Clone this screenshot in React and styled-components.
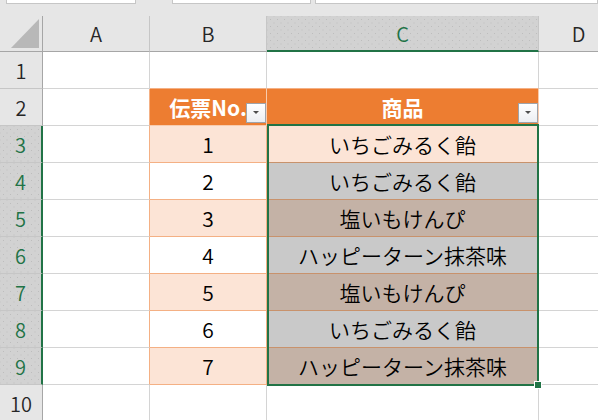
import React from 'react'
import styled, { createGlobalStyle, css } from 'styled-components'

const GlobalStyle = createGlobalStyle`
  html, body {
    margin: 0;
    padding: 0;
    background: #ffffff;
  }
  body {
    font-family: "Noto Sans CJK JP", "Noto Sans", sans-serif;
    font-weight: 350;
  }
`

const GREEN = '#217346'
const GRID = '#d4d4d4'
const HEAD_LINE = '#c6c6c6'

const fills = {
  peach: '#fce4d6',
  white: '#ffffff',
  gray: '#c9c9c9',
  brown: '#c4b2a6',
}

const columns = ['A', 'B', 'C', 'D']

const rows = [
  { n: 1 },
  { n: 2, header: true },
  { n: 3, no: 1, item: 'いちごみるく飴', tone: 'peach' },
  { n: 4, no: 2, item: 'いちごみるく飴', tone: 'gray' },
  { n: 5, no: 3, item: '塩いもけんぴ', tone: 'brown' },
  { n: 6, no: 4, item: 'ハッピーターン抹茶味', tone: 'gray' },
  { n: 7, no: 5, item: '塩いもけんぴ', tone: 'brown' },
  { n: 8, no: 6, item: 'いちごみるく飴', tone: 'gray' },
  { n: 9, no: 7, item: 'ハッピーターン抹茶味', tone: 'brown' },
  { n: 10 },
]

// selected range C3:C9 starts on the first data row
const SELECTION_START = 3
const SELECTION_ROWS = 7

const dotted = css`
  background-color: #d2d2d2;
  background-image:
    radial-gradient(circle, #bdbdbd 0.6px, transparent 0.9px),
    radial-gradient(circle, #bdbdbd 0.6px, transparent 0.9px);
  background-size: 7px 7px;
  background-position: 0 0, 3.5px 3.5px;
`

class Sheet extends React.Component {
  render() {
    return (
      <Window>
        <GlobalStyle />
        <FormulaStrip>
          <StripBox $left={6} $width={128} />
          <StripBox $left={36} $width={137} />
          <StripBox $left={4} $grow />
        </FormulaStrip>
        <Grid>
          <Corner>
            <svg width="28" height="29" viewBox="0 0 28 29">
              <polygon points="28,0 28,29 0,29" fill="#b8b8b8" />
            </svg>
          </Corner>
          {columns.map(col => (
            <ColHead key={col} $active={col === 'C'}>{col}</ColHead>
          ))}

          {rows.map(row => {
            const inTable = !!row.header || !!row.no
            const active = !!row.no
            const bandB = row.no && row.no % 2 === 1 ? 'peach' : 'white'
            return (
              <React.Fragment key={row.n}>
                <RowHead $active={active}>{row.n}</RowHead>
                <Cell $side={inTable ? '#f4b084' : GRID} />
                {row.header ? (
                  <>
                    <HeadCell $side="#f8cbad">
                      伝票No.
                      <FilterButton>
                        <FilterArrow />
                      </FilterButton>
                    </HeadCell>
                    <HeadCell $side="#f8cbad">
                      商品
                      <FilterButton>
                        <FilterArrow />
                      </FilterButton>
                    </HeadCell>
                  </>
                ) : row.no ? (
                  <>
                    <Cell $bg={fills[bandB]} $line="#f4b084" $side="#f4b084">{row.no}</Cell>
                    <Cell
                      $bg={fills[row.tone]}
                      $line="#c8926c"
                      $side="#c8926c"
                      $anchor={row.n === SELECTION_START}
                    >
                      {row.item}
                      {row.n === SELECTION_START && (
                        <Selection $rows={SELECTION_ROWS}>
                          <FillHandle />
                        </Selection>
                      )}
                    </Cell>
                  </>
                ) : (
                  <>
                    <Cell $line={row.n === 1 ? '#f4b084' : GRID} />
                    <Cell $line={row.n === 1 ? '#f4b084' : GRID} />
                  </>
                )}
                <Cell />
              </React.Fragment>
            )
          })}
        </Grid>
      </Window>
    )
  }
}

const Window = styled.div`
  width: 598px;
  height: 420px;
  overflow: hidden;
  background: #e6e6e6;
`

const FormulaStrip = styled.div`
  display: flex;
  height: 16px;
  background: #e6e6e6;
`

const StripBox = styled.div`
  margin-left: ${p => p.$left}px;
  width: ${p => (p.$grow ? 'auto' : `${p.$width}px`)};
  flex: ${p => (p.$grow ? '1' : 'none')};
  height: 3px;
  background: #ffffff;
  border: 1px solid #c6c6c6;
  border-top: none;
`

const Grid = styled.div`
  display: grid;
  grid-template-columns: 43px 107px 117px 272px 80px;
  grid-template-rows: 36px;
  grid-auto-rows: 37px;
  background: #ffffff;
  color: #000000;
`

const Corner = styled.div`
  display: flex;
  align-items: flex-end;
  justify-content: flex-end;
  padding: 0 3px 3px 0;
  background: #e6e6e6;
  border-right: 1px solid #a6a6a6;
  border-bottom: 1px solid #a6a6a6;
`

const ColHead = styled.div`
  display: flex;
  align-items: center;
  justify-content: center;
  font-size: 20px;
  background: #e6e6e6;
  color: #262626;
  border-right: 1px solid ${HEAD_LINE};
  border-bottom: 1px solid #a6a6a6;
  ${p => p.$active && css`
    ${dotted};
    color: ${GREEN};
    border-bottom: 2px solid ${GREEN};
  `}
`

const RowHead = styled.div`
  display: flex;
  align-items: center;
  justify-content: center;
  font-size: 20px;
  background: #e6e6e6;
  color: #262626;
  border-right: 1px solid #a6a6a6;
  border-bottom: 1px solid ${HEAD_LINE};
  ${p => p.$active && css`
    ${dotted};
    color: ${GREEN};
    border-right: 2px solid ${GREEN};
  `}
`

const Cell = styled.div`
  position: ${p => (p.$anchor ? 'relative' : 'static')};
  display: flex;
  align-items: center;
  justify-content: center;
  font-size: 21px;
  white-space: nowrap;
  background: ${p => p.$bg || '#ffffff'};
  border-right: 1px solid ${p => p.$side || GRID};
  border-bottom: 1px solid ${p => p.$line || GRID};
`

const HeadCell = styled.div`
  position: relative;
  display: flex;
  align-items: center;
  justify-content: center;
  font-size: 21px;
  font-weight: 700;
  color: #ffffff;
  white-space: nowrap;
  background: #ed7d31;
  border-right: 1px solid ${p => p.$side};
  border-bottom: 1px solid #f8cbad;
`

const FilterButton = styled.span`
  position: absolute;
  right: 0;
  top: 14px;
  width: 20px;
  height: 20px;
  box-sizing: border-box;
  display: flex;
  justify-content: center;
  padding-top: 7px;
  background: linear-gradient(#ffffff, #eceef2);
  border: 1px solid #9ea3aa;
`

const FilterArrow = styled.span`
  width: 0;
  height: 0;
  border-left: 3px solid transparent;
  border-right: 3px solid transparent;
  border-top: 3px solid #4d4d4d;
`

const Selection = styled.div`
  position: absolute;
  left: 0;
  top: -2px;
  width: 272px;
  height: ${p => p.$rows * 37 + 3}px;
  z-index: 2;
  box-sizing: border-box;
  border: 2px solid ${GREEN};
  pointer-events: none;
`

const FillHandle = styled.div`
  position: absolute;
  right: -4px;
  bottom: -4px;
  width: 6px;
  height: 6px;
  background: ${GREEN};
  box-shadow: 0 0 0 1px #ffffff;
`

export default function App() {
  return <Sheet />
}
